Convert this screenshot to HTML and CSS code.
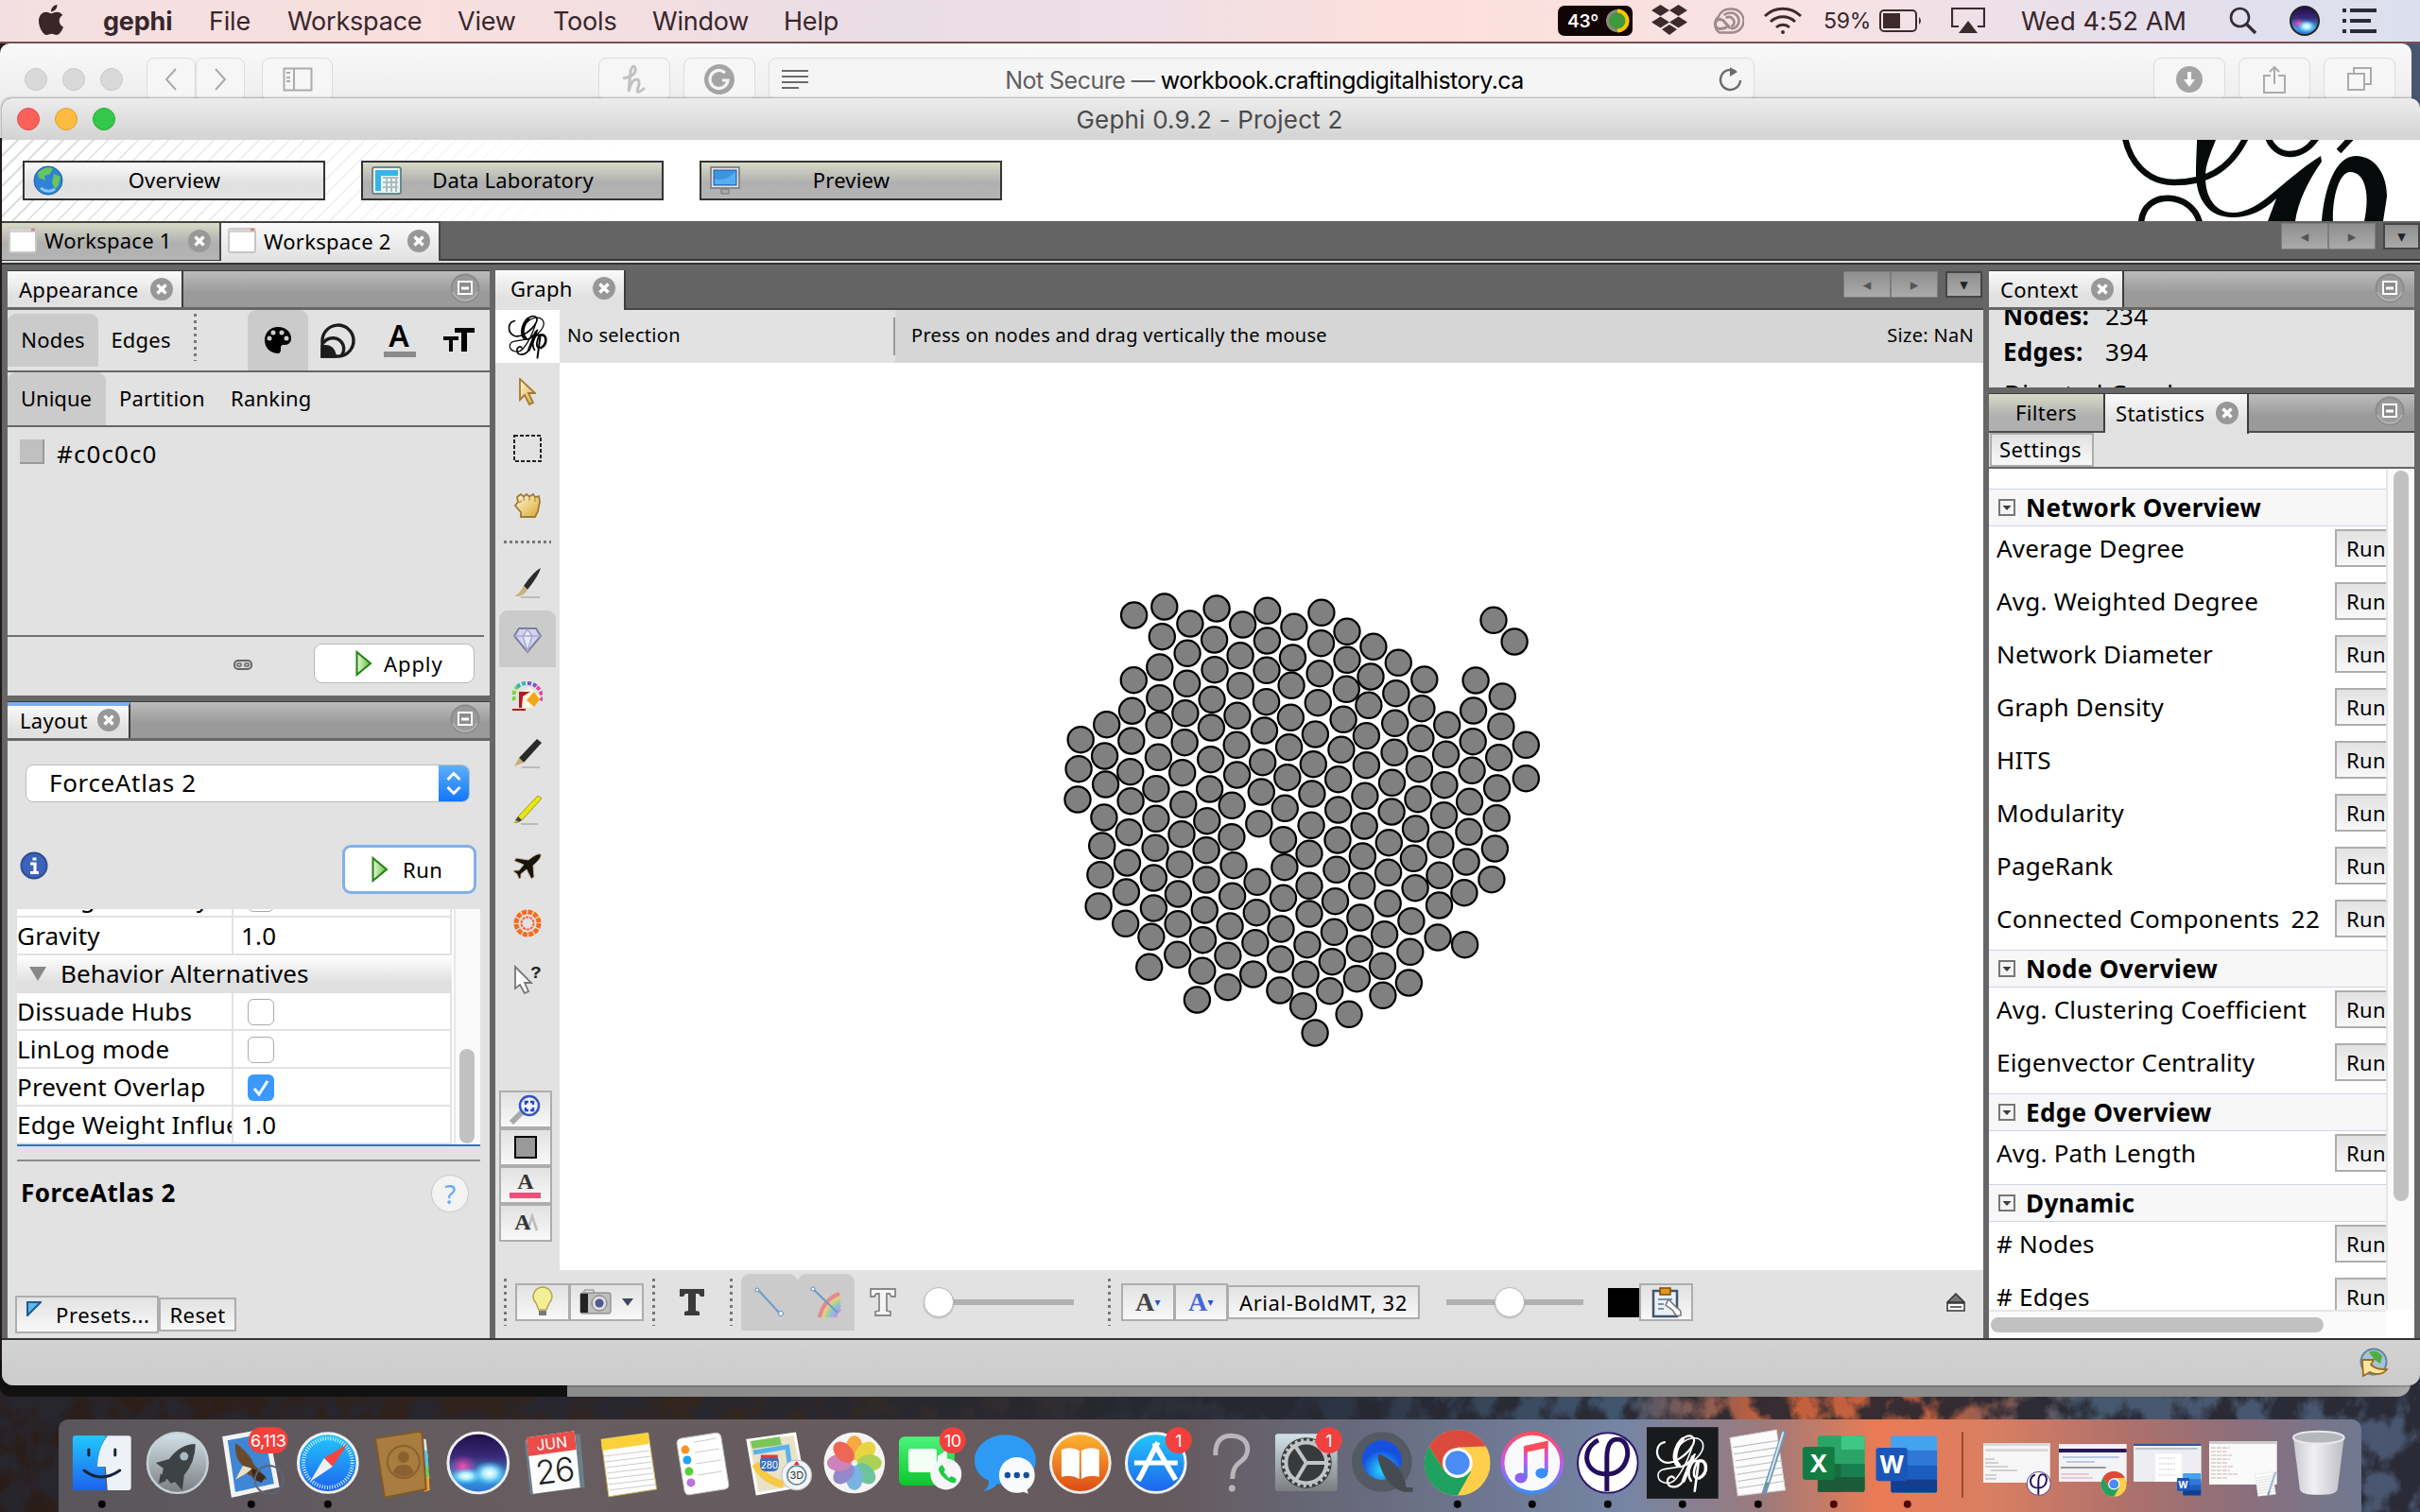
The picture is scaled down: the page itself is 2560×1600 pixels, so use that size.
FILE: index.html
```html
<!DOCTYPE html>
<html lang="en">
<head>
<meta charset="utf-8">
<title>Gephi 0.9.2 - Project 2</title>
<link rel="stylesheet" href="styles.css">
</head>
<body>
<svg class="defs" aria-hidden="true">
  <defs>
    <linearGradient id="gBlue" x2="0" y2="1"><stop stop-color="#22c8fb"/><stop offset="1" stop-color="#1e62ee"/></linearGradient>
    <linearGradient id="gGreen" x2="0" y2="1"><stop stop-color="#4df37a"/><stop offset="1" stop-color="#0cc62e"/></linearGradient>
    <linearGradient id="gOrange" x2="0" y2="1"><stop stop-color="#fdb62f"/><stop offset="1" stop-color="#dc4a17"/></linearGradient>
    <linearGradient id="gGrey" x2="0" y2="1"><stop stop-color="#d3e3ea"/><stop offset="1" stop-color="#7b7e81"/></linearGradient>
    <linearGradient id="gGold" x2="1" y2="1"><stop stop-color="#fff8e0"/><stop offset="1" stop-color="#d9a92c"/></linearGradient>
    <linearGradient id="gPlay" x2="1" y2="0"><stop stop-color="#e8f6d8"/><stop offset="1" stop-color="#62bd3b"/></linearGradient>
    <radialGradient id="gSiri"><stop stop-color="#7be8ff"/><stop offset=".45" stop-color="#5a3fb5"/><stop offset="1" stop-color="#0d0b33"/></radialGradient>
    <linearGradient id="gOrb" x2="0" y2="1"><stop stop-color="#1c0d45"/><stop offset=".4" stop-color="#3a2a78"/><stop offset=".75" stop-color="#38a0e0"/><stop offset="1" stop-color="#2b6fd0"/></linearGradient>
    <radialGradient id="gPink"><stop stop-color="#ff4fb0"/><stop offset="1" stop-color="#c22f9f" stop-opacity="0"/></radialGradient>
    <radialGradient id="gIce"><stop stop-color="#ffffff"/><stop offset=".4" stop-color="#a6ecff"/><stop offset="1" stop-color="#49c4ff" stop-opacity="0"/></radialGradient>
    <radialGradient id="gQt" cy=".75"><stop stop-color="#29dcff"/><stop offset="1" stop-color="#1550e0"/></radialGradient>
    <linearGradient id="gNote" x2="0" y2="1"><stop stop-color="#fb4d5d"/><stop offset=".5" stop-color="#c558f0"/><stop offset="1" stop-color="#3a8dfb"/></linearGradient>
    <linearGradient id="gTrash" x2="1" y2="0"><stop stop-color="#c9c9cf"/><stop offset=".4" stop-color="#f1f1f4"/><stop offset="1" stop-color="#bcbcc4"/></linearGradient>
    <linearGradient id="gRain" x2="1" y2="0"><stop stop-color="#ee7474"/><stop offset=".5" stop-color="#9bd58b"/><stop offset="1" stop-color="#ae8ce0"/></linearGradient>
    <symbol id="close" viewBox="0 0 24 24"><circle cx="12" cy="12" r="12" fill="#989898"/><path d="M7.500 7.500l9 9M16.500 7.500l-9 9" stroke="#fff" stroke-width="3.400"/></symbol>
    <symbol id="mini" viewBox="0 0 32 32"><circle cx="16" cy="16" r="14.500" fill="#9a9a9a" stroke="#8b8b8b" stroke-width="2"/><path d="M3 20a14 14 0 0 0 26 0" fill="none" stroke="#b4b4b4" stroke-width="2"/><rect x="9" y="9" width="14" height="13" fill="#8c8c8c" stroke="#fff" stroke-width="2"/><path d="M12 16h8" stroke="#fff" stroke-width="3"/></symbol>
    <symbol id="play" viewBox="0 0 18 28"><path d="M1.500 2v24L16 14z" fill="url(#gPlay)" stroke="#1d8410" stroke-width="2"/></symbol>
    <symbol id="page" viewBox="0 0 32 30"><rect x="2" y="2" width="28" height="25" rx="2" fill="#fff" stroke="#c8c6c4" stroke-width="2"/><path d="M2 4h28" stroke="#d6d2d0" stroke-width="4"/><path d="M25 3h4" stroke="#d58a84" stroke-width="3"/></symbol>
    <symbol id="twisty" viewBox="0 0 18 18"><rect x="1" y="1" width="16" height="16" fill="#f4f4f4" stroke="#767676" stroke-width="2"/><path d="M4.500 7h9L9 12z" fill="#3c3c3c"/></symbol>
    <symbol id="gephi" viewBox="0 0 64 64"><g fill="none" stroke="currentColor" stroke-linecap="round"><path stroke-width="2.200" d="M14 10C4 12 3 26 13 31 24 35 39 22 44 13 48 5 42 1 35 5 25 10 21 26 26 34 31 40 41 32 46 23"/><path stroke-width="1.600" d="M28 16C36 4 50 3 54 10 58 18 48 30 35 35 22 39 8 36 7 45 7 53 19 57 26 49 32 42 39 28 43 16"/><path stroke-width="4" d="M33 7C24 18 24 30 29 34M44 26L34 51"/><path stroke-width="2.200" d="M34 51C29 59 18 60 17 52 17 47 22 45 24 48"/><path stroke-width="2.500" d="M42 51C36 42 43 28 49 30 45 38 42 50 51 48"/><path stroke-width="3.500" d="M51 48C61 43 59 28 51 30"/><path stroke-width="2.600" d="M50 32L46 62"/></g></symbol>
    <symbol id="word" viewBox="0 0 66 62"><rect x="16" y="0" width="50" height="62" rx="3" fill="#45a2ee"/><path d="M16 16h50v16H16z" fill="#2f78d6"/><path d="M16 32h50v15H16z" fill="#1c5dc2"/><path d="M16 47h50v12a3 3 0 0 1-3 3H19a3 3 0 0 1-3-3z" fill="#133e8e"/><rect y="13" width="34" height="36" rx="3" fill="#1a56b8"/><text x="17" y="41" font-family="Inter" font-size="26" font-weight="700" fill="#fff" text-anchor="middle">W</text></symbol>
    <symbol id="chrome" viewBox="-34 -34 68 68"><circle r="34" fill="#ffcf4b"/><path d="M-29.500 -17A34 34 0 0 1 29.500 -17L0 -16-14 8z" fill="#dc4a3d"/><path d="M-29.500 -17A34 34 0 0 0 0 34L14 9-14 8z" fill="#1fa15f"/><circle r="15.500" fill="#fff"/><circle r="12.500" fill="#4b8bf4"/></symbol>
    <symbol id="phi" viewBox="0 0 66 66"><circle cx="33" cy="33" r="32" fill="#fff" stroke="#2c1668" stroke-width="2"/><path d="M23 9C4 18 7 45 32 45 58 45 60 8 43 8 34 8 32 18 32 28V63" fill="none" stroke="#220d5e" stroke-width="5"/></symbol>
    <symbol id="sheet" viewBox="0 0 60 70"><path d="M1 9L49 1l9 62L9 69z" fill="#fbfbfb" stroke="#d5d5d5"/><path d="M4 19l46-7M5 26l46-7M6 33l46-7M7 40l46-7M8 47l46-7M9 54l46-7M10 61l46-7" stroke="#bbb"/><path d="M57 2L39 58l-3 9" stroke="#7294ab" stroke-width="5" fill="none"/><path d="M56 3L40 55" stroke="#d6e6f0" stroke-width="2"/></symbol>
  </defs>
</svg>

<div class="desktop">
  <svg class="rock" width="2560" height="140"><filter id="rockTex" x="0" y="0" width="100%" height="100%"><feTurbulence type="fractalNoise" baseFrequency=".03 .025" numOctaves="5" seed="8"/><feColorMatrix values="0 0 0 0 0.02  0 0 0 0 0.02  0 0 0 0 0.03  4.500 0 0 0 -1.700"/></filter><rect width="2560" height="140" filter="url(#rockTex)"/></svg>

  <header class="menubar">
    <svg class="apple" viewBox="0 0 24 24"><path fill="#38262b" d="M12.152 6.896c-.948 0-2.415-1.078-3.96-1.04-2.04.027-3.91 1.183-4.961 3.014-2.117 3.675-.546 9.103 1.519 12.09 1.013 1.454 2.208 3.09 3.792 3.039 1.52-.065 2.09-.987 3.935-.987 1.831 0 2.35.987 3.96.948 1.637-.026 2.676-1.48 3.676-2.948 1.156-1.688 1.636-3.325 1.662-3.415-.039-.013-3.182-1.221-3.22-4.857-.026-3.04 2.48-4.494 2.597-4.559-1.429-2.09-3.623-2.324-4.39-2.376-2-.156-3.675 1.09-4.61 1.09zM15.53 3.83c.843-1.012 1.4-2.427 1.245-3.83-1.207.052-2.662.805-3.532 1.818-.78.896-1.454 2.338-1.273 3.714 1.338.104 2.715-.688 3.559-1.701"/></svg>
    <nav class="menus"><b>gephi</b><span>File</span><span>Workspace</span><span>View</span><span>Tools</span><span>Window</span><span>Help</span></nav>
    <div class="tray">
      <span class="temp">43º<svg width="26" height="28" viewBox="0 0 26 28"><circle cx="13" cy="14" r="10.500" fill="#3f9a3a" stroke="#8d8580" stroke-width="3"/><path d="M13 3.500a10.500 10.500 0 0 1 0 21" fill="none" stroke="#ffc400" stroke-width="4"/></svg></span>
      <svg class="t-drop" width="38" height="34" viewBox="0 0 38 34" fill="#3c2a2d"><path d="M9.500 0L19 6 9.500 12 0 6zM28.500 0L38 6l-9.500 6L19 6zM9.500 12.500L19 18.500l-9.500 6-9.500-6zM28.500 12.500l9.500 6-9.500 6-9.500-6zM19 21l8 5-8 6-8-6z"/></svg>
      <svg class="t-cc" width="38" height="28" viewBox="0 0 38 28" fill="none" stroke="#9c8a8c"><path d="M12 26.500a10.500 10.500 0 0 1-1-17A12.500 12.500 0 0 1 24 1.500a12.500 12.500 0 0 1 2 25z" stroke-width="2.400"/><path d="M20 20.500q-3 2-7.500 2a5 5 0 0 1 0-10q3 0 5 3l6 6.500" stroke-width="3"/><path d="M16.500 8q3-2.500 7.500-2.500a8.500 8.500 0 0 1 0 17M18.500 11q5-3 8 1.500t-2 7.500" stroke-width="2.600"/></svg>
      <svg class="t-wifi" width="42" height="30" viewBox="0 0 42 30" fill="none" stroke="#3c2a2d" stroke-width="3"><path d="M2 10a27 27 0 0 1 38 0M8 16a19 19 0 0 1 26 0M14 22a10.500 10.500 0 0 1 14 0"/><circle cx="21" cy="27" r="2" fill="#3c2a2d" stroke="none"/></svg>
      <span class="pct">59%</span>
      <svg class="t-bat" width="46" height="24" viewBox="0 0 46 24"><rect x="1" y="1" width="38" height="22" rx="4" fill="none" stroke="#3c2a2d" stroke-width="2"/><path d="M4 4h18v16H4z" fill="#3c2a2d"/><path d="M42 8q4 4 0 8z" fill="#3c2a2d"/></svg>
      <svg class="t-air" width="36" height="28" viewBox="0 0 36 28"><path d="M8 20H1V1h34v19h-7" fill="none" stroke="#3c2a2d" stroke-width="2.200"/><path d="M18 14l10 13H8z" fill="#3c2a2d"/></svg>
      <span class="clock">Wed 4:52 AM</span>
      <svg class="t-find" width="30" height="30" viewBox="0 0 30 30" fill="none" stroke="#332c38" stroke-width="2.600"><circle cx="11.500" cy="11.500" r="9.500"/><path d="M18 18l10 10" stroke-width="3.400"/></svg>
      <svg class="t-siri" width="32" height="32" viewBox="0 0 32 32"><circle cx="16" cy="16" r="15" fill="url(#gOrb)" stroke="#222" stroke-width="2"/><ellipse cx="10" cy="19" rx="8" ry="6" fill="url(#gPink)"/><ellipse cx="18" cy="22" rx="10" ry="7" fill="url(#gIce)"/></svg>
      <svg class="t-list" width="38" height="26" viewBox="0 0 38 26" fill="none" stroke="#2b2b36" stroke-width="4"><path d="M0 2h4M8 2h28M0 13h4M8 13h22M0 24h4M8 24h28"/></svg>
    </div>
  </header>

  <section class="safari">
    <div class="lights off"><i></i><i></i><i></i></div>
    <span class="sb back"><svg width="16" height="26" viewBox="0 0 16 26"><path d="M13 2L3 13l10 11"/></svg></span>
    <span class="sb fwd"><svg width="16" height="26" viewBox="0 0 16 26"><path d="M3 2l10 11L3 24"/></svg></span>
    <span class="sb side"><svg width="32" height="26" viewBox="0 0 32 26"><path d="M1.500 1.500h29v23h-29zM12 2v22M4 6h4M4 11h4M4 15h4"/></svg></span>
    <span class="sb honey"><svg width="26" height="32" viewBox="0 0 26 32"><path d="M1 15Q16 12 14 4 12-1 9 7L7 29Q10 16 15 16T17 25 24 25" stroke-width="3"/></svg></span>
    <span class="sb gram"><svg width="34" height="34" viewBox="0 0 34 34"><circle cx="17" cy="17" r="16" fill="#a4a4a4" stroke="none"/><path d="M23 10a9.500 9.500 0 1 0 3 8h-6" stroke="#f3f3f3" stroke-width="3.200"/></svg></span>
    <div class="addr">
      <svg width="30" height="22" viewBox="0 0 30 22" stroke="#6b6b6b" stroke-width="2.200"><path d="M0 2h28M0 8h28M0 14h28M0 20h18"/></svg>
      <p><span>Not Secure —</span> workbook.craftingdigitalhistory.ca</p>
      <svg width="26" height="28" viewBox="0 0 26 28" fill="none" stroke="#6b6b6b" stroke-width="2.400"><path d="M18 5.500A10.500 10.500 0 1 0 23 15"/><path d="M12 1l8 5-8 5z" fill="#6b6b6b" stroke="none"/></svg>
    </div>
    <span class="sb down"><svg width="28" height="28" viewBox="0 0 28 28"><circle cx="14" cy="14" r="14" fill="#a4a4a4" stroke="none"/><path d="M14 6v9" stroke="#fff" stroke-width="4"/><path d="M8 14h12l-6 8z" fill="#fff" stroke="none"/></svg></span>
    <span class="sb share"><svg width="24" height="30" viewBox="0 0 24 30"><path d="M8 11H1v18h22V11h-7M12 20V2M7 7l5-5 5 5"/></svg></span>
    <span class="sb tabsb"><svg width="26" height="26" viewBox="0 0 26 26"><path d="M1 7h17v17H1zM7 7V1h18v17h-7"/></svg></span>
  </section>
  <div class="backwin dark"></div>
  <div class="backwin grey"></div>

  <main class="gephi">
    <div class="titlebar"><div class="lights"><i></i><i></i><i></i></div><h1>Gephi 0.9.2 - Project 2</h1></div>
    <div class="banner">
      <button class="mode on"><svg width="32" height="32" viewBox="0 0 32 32"><circle cx="16" cy="16" r="15" fill="#2f83d6" stroke="#1d5fa8"/><path d="M5 8q8-8 16-5l-3 6-6 2 1 5-7-3zM22 9l7 3-2 9-4 4-3-7z" fill="#67c65e"/><path d="M8 24q8 6 15 1" stroke="#8cc5f6" stroke-width="3" fill="none"/></svg><span>Overview</span></button>
      <button class="mode"><svg width="32" height="32" viewBox="0 0 32 32"><rect x="1" y="2" width="30" height="28" rx="2" fill="#eef4f4" stroke="#6b8a8c" stroke-width="2"/><path d="M4 5h24v6H4zM4 5h6v22H4z" fill="#35b4ea"/><path d="M12 13h16M12 18h16M12 23h16M16 12v16M21 12v16M26 12v16" stroke="#a8bfc0" stroke-width="2"/></svg><span>Data Laboratory</span></button>
      <button class="mode"><svg width="32" height="32" viewBox="0 0 32 32"><rect x="1" y="2" width="30" height="22" fill="#e8e6e2" stroke="#888" stroke-width="2"/><rect x="4" y="5" width="24" height="16" fill="#3d94e0" stroke="#1d5fa8"/><path d="M5 14q10 4 22-7v13H5z" fill="#57aef0"/><path d="M12 25h8v5h-8z" fill="#aaa" stroke="#777"/></svg><span>Preview</span></button>
      <svg class="script" width="290" height="86" viewBox="0 0 290 86" fill="none" stroke="#070a0b"><path stroke-width="6.500" d="M3-2C8 22 25 45 55 45 86 45 113 34 131-3"/><path d="M79 0h20C90 22 88 30 88 40 88 60 98 77 117 77 146 77 166 45 210 17l1 6C196 44 186 66 183 86h-29C157 78 160 70 163 62 148 76 134 82 117 82 90 82 79 62 78 38 78 20 79 10 79 0z" fill="#070a0b" stroke="none"/><path stroke-width="6.500" d="M154-3C162 20 190 22 206-3M243-3L229 12M20 88C22 52 74 54 82 88"/><path d="M211 86C214 50 226 17 247 17 268 17 280 37 280 60L276 86H256C262 60 258 34 241 34 230 34 222 60 223 86z" fill="#070a0b" stroke="none"/></svg>
    </div>
    <div class="wsbar">
      <span class="wtab"><svg width="32" height="30"><use href="#page"/></svg><b>Workspace 1</b><svg class="x" width="24" height="24"><use href="#close"/></svg></span>
      <span class="wtab on"><svg width="32" height="30"><use href="#page"/></svg><b>Workspace 2</b><svg class="x" width="24" height="24"><use href="#close"/></svg></span>
      <div class="navs"><i>◂</i><i>▸</i><i class="dd">▾</i></div>
    </div>

    <div class="cols">
      <div class="col">
        <section class="panel appearance">
          <div class="tabs"><span class="tab on ap">Appearance<svg width="24" height="24"><use href="#close"/></svg></span><svg class="mini" width="32" height="32"><use href="#mini"/></svg></div>
          <div class="row1"><span class="tg on">Nodes</span><span class="tg">Edges</span><i class="vdots"></i>
            <span class="ib on first"><svg width="30" height="28" viewBox="0 0 30 28"><path d="M15 0C24 0 29 6 29 12 29 19 23 19 20 19 16 20 20 26 16 28 6 28 1 21 1 14 1 6 7 0 15 0z"/><g fill="#ccc"><circle cx="6" cy="12" r="2.500"/><circle cx="10" cy="6" r="2.500"/><circle cx="19" cy="6" r="2.500"/><circle cx="24" cy="12" r="2.500"/></g></svg></span>
            <span class="ib"><svg width="38" height="38" viewBox="0 0 38 38" fill="none" stroke="#1c1c1c" stroke-width="3.400"><path d="M2 20V36H20A16.500 16.500 0 1 0 2 20z"/><path d="M3 22a12 12 0 0 1 21 2q2 6-2 12"/><path d="M2 36V26q12-2 13 10z" fill="#1c1c1c"/></svg></span>
            <span class="ib"><svg width="38" height="38" viewBox="0 0 38 38"><path d="M3 31h34v6H3z" fill="#8b8b8b"/><text x="19" y="26" font-size="32" text-anchor="middle" font-family="Noto Sans" font-weight="600">A</text></svg></span>
            <span class="ib"><svg width="34" height="26" viewBox="0 0 34 26"><path d="M12 0h21v5h-8v20h-6V5h-7zM0 9h16v4h-6v12H6V13H0z"/></svg></span>
          </div>
          <div class="row2"><span class="tg on">Unique</span><span class="tg">Partition</span><span class="tg">Ranking</span></div>
          <div class="swatch"><i></i><span>#c0c0c0</span></div>
          <div class="apply"><svg width="20" height="12" viewBox="0 0 20 12" fill="#d8d8d8" stroke="#666" stroke-width="2"><rect x="1" y="1" width="18" height="9" rx="4"/><rect x="4" y="4" width="4" height="3" rx="1" stroke-width="1.500"/><rect x="12" y="4" width="4" height="3" rx="1" stroke-width="1.500"/></svg><button class="mac"><svg width="18" height="28"><use href="#play"/></svg>Apply</button></div>
        </section>

        <section class="panel layout">
          <div class="tabs"><span class="tab on focus">Layout<svg width="24" height="24"><use href="#close"/></svg></span><svg class="mini" width="32" height="32"><use href="#mini"/></svg></div>
          <div class="combo"><span>ForceAtlas 2</span><i><svg width="16" height="26" viewBox="0 0 16 26" fill="none" stroke="#fff" stroke-width="3"><path d="M1.500 9L8 2.500 14.500 9M1.500 17L8 23.500 14.500 17"/></svg></i></div>
          <div class="runrow"><svg width="30" height="30" viewBox="0 0 30 30"><circle cx="15" cy="15" r="13.500" fill="#3c63b9" stroke="#2d4b91" stroke-width="2"/><path d="M11 13h5v9M11 22.500h9M13.500 8h4" stroke="#fff" stroke-width="3.200" fill="none"/></svg><button class="mac ring"><svg width="18" height="28"><use href="#play"/></svg>Run</button></div>
          <div class="props">
            <div class="ptable">
              <div class="pr cut"><span>Stronger Gravity</span><span><i class="cb"></i></span></div>
              <div class="pr"><span>Gravity</span><span>1.0</span></div>
              <div class="pgroup"><i></i>Behavior Alternatives</div>
              <div class="pr"><span>Dissuade Hubs</span><span><i class="cb"></i></span></div>
              <div class="pr"><span>LinLog mode</span><span><i class="cb"></i></span></div>
              <div class="pr"><span>Prevent Overlap</span><span><i class="cb ck"><svg width="28" height="28" viewBox="0 0 28 28"><path d="M7 15l5 6 9-14" fill="none" stroke="#fff" stroke-width="3"/></svg></i></span></div>
              <div class="pr"><span>Edge Weight Influence</span><span>1.0</span></div>
            </div>
            <div class="pscroll"><i></i></div>
          </div>
          <div class="pdesc"><b>ForceAtlas 2</b><span class="q">?</span></div>
          <div class="pfoot"><button class="flat pre"><svg width="16" height="16" viewBox="0 0 16 16"><path d="M1 1h14L1 15z" fill="#5fb6ea" stroke="#1b5d92" stroke-width="2"/></svg>Presets...</button><button class="flat">Reset</button></div>
        </section>
      </div>

      <section class="graph">
        <div class="gtabs"><span class="tab on">Graph<svg width="24" height="24"><use href="#close"/></svg></span><div class="navs"><i>◂</i><i>▸</i><i class="dd">▾</i></div></div>
        <div class="gmid">
          <aside class="tools">
            <span class="logo"><svg width="52" height="48"><use href="#gephi"/></svg></span>
            <div class="tool a"><svg width="18" height="30" viewBox="0 0 18 30"><path d="M1 1v22l5-5 5 10 4-2-5-10h7z" fill="url(#gGold)" stroke="#a07a35" stroke-width="1.800"/></svg></div>
            <div class="tool b"><svg width="30" height="30" viewBox="0 0 30 30"><rect x="1" y="1" width="28" height="27" fill="none" stroke="#222" stroke-width="2" stroke-dasharray="4 2"/></svg></div>
            <div class="tool c"><svg width="28" height="26" viewBox="0 0 28 26"><path d="M7 25v-5l-6-7 3-4-1-5 4-3 3 2.500 3-2.500 3 2.500 4-2.500 2 3 4-1 1 6-2 10-3 6z" fill="url(#gGold)" stroke="#a07a35" stroke-width="1.800"/><path d="M10 4v4M16 4v4M22 5v4M4 10l4-2" stroke="#c69a45" stroke-width="1.500"/></svg></div>
            <i class="hdots"></i>
            <div class="tool d"><svg width="30" height="32" viewBox="0 0 30 32"><path d="M29 0q-2 8-14 23l-4-4Q22 3 29 0z" fill="#2b2b2b"/><path d="M11 19l4 4q-4 8-14 7 6-3 10-11z" fill="#c7b079"/><path d="M8 31h20" stroke="#bbb" stroke-width="2"/></svg></div>
            <div class="tool on"><svg width="30" height="28" viewBox="0 0 30 28"><path d="M6 1h18l5 8-14 17L1 9z" fill="#d5d5f2" stroke="#7c7c9e" stroke-width="2"/><path d="M1 9h28M10 9l5 16 5-16-5-7z" fill="#e8e8fa" stroke="#a9a9cc" stroke-width="1.500"/></svg></div>
            <div class="tool"><svg width="32" height="32" viewBox="0 0 32 32"><g fill="none" stroke-width="4" stroke-dasharray="4 2"><path d="M2 20A14 14 0 0 1 5 6" stroke="#6fd83a"/><path d="M5 6A14 14 0 0 1 16 2" stroke="#35b6b0"/><path d="M16 2a14 14 0 0 1 10 4" stroke="#7a58c8"/><path d="M26 6a14 14 0 0 1 4 16" stroke="#e0489f"/></g><path d="M8 13l10-7 12 11-9 11H10z" fill="#fdf5e6"/><path d="M15 20l8-9 6 8-6 8z" fill="#f0a818"/><path d="M7 28V11h12l-8 5-1 12zM0 29h14v2H0z" fill="#b01c1c"/></svg></div>
            <div class="tool"><svg width="32" height="32" viewBox="0 0 32 32"><path d="M31 5l-5-4L7 21l5 5z" fill="#2a2a2a"/><path d="M7 21l5 5-10 4z" fill="#c9ac74"/><path d="M10 31h19" stroke="#bbb" stroke-width="2"/></svg></div>
            <div class="tool"><svg width="32" height="32" viewBox="0 0 32 32"><path d="M31 4l-4-3L6 23l4 4z" fill="#e8e60d" stroke="#9c9b22"/><path d="M6 23l4 4-3 2-4-2z" fill="#444"/><path d="M4 27l3 3H1z" fill="#b9b80f"/><path d="M9 31h18" stroke="#bbb" stroke-width="2"/></svg></div>
            <div class="tool pl"><svg width="30" height="28" viewBox="0 0 30 28"><path d="M29 1q2 3-8 12l1 12-3 2-5-10-6 5 0 4-2 1-2-5-4-3 1-1 5 0 5-6L1 8l2-3 13 2Q26-1 29 1z" fill="#17150f" stroke="#cbb98c"/></svg></div>
            <div class="tool"><svg width="30" height="30" viewBox="0 0 30 30" fill="none" stroke="#f76b1c"><circle cx="15" cy="15" r="12" stroke-width="5" stroke-dasharray="5 1.280"/><circle cx="15" cy="15" r="6.500" stroke-width="2" stroke="#f4623a" stroke-dasharray="3 1"/></svg></div>
            <div class="tool h"><svg width="30" height="34" viewBox="0 0 30 34"><path d="M2 3v23l5-4 5 9 4-2-4-9h7z" fill="#fff" stroke="#777" stroke-width="1.800"/><text x="24" y="15" font-size="19" font-weight="700" text-anchor="middle" font-family="Liberation Mono" fill="#222">?</text></svg></div>
            <div class="vbtns">
              <button class="flat"><svg width="34" height="32" viewBox="0 0 34 32"><path d="M2 30L13 19" stroke="#aaa" stroke-width="6"/><circle cx="21" cy="12" r="10" fill="#eef3ff" stroke="#3756bb" stroke-width="2.500"/><path d="M17 11V8h3M22 8h3v3M25 14v3h-3M20 17h-3v-3" fill="none" stroke="#2547c6" stroke-width="2.400"/></svg></button>
              <button class="flat"><svg width="24" height="24" viewBox="0 0 24 24"><rect x="1" y="1" width="22" height="22" fill="#999" stroke="#000" stroke-width="2"/></svg></button>
              <button class="flat"><svg width="34" height="30" viewBox="0 0 34 30"><text x="17" y="19" font-size="24" font-weight="700" text-anchor="middle" font-family="Liberation Serif" fill="#333">A</text><path d="M0 23h33v6H0z" fill="#f9497a"/></svg></button>
              <button class="flat"><svg width="34" height="30" viewBox="0 0 34 30"><path d="M19 23l5-15 5 15" fill="none" stroke="#bbb" stroke-width="2.500"/><text x="14" y="22" font-size="24" font-weight="700" text-anchor="middle" font-family="Liberation Serif" fill="#333">A</text></svg></button>
            </div>
          </aside>
          <div class="gright">
            <div class="infobar"><span class="sel">No selection</span><span class="hint">Press on nodes and drag vertically the mouse</span><span class="size">Size: NaN</span></div>
            <div class="canvas"><svg id="net" viewBox="592 384 1506 960"></svg></div>
          </div>
        </div>
        <div class="gbar">
          <i class="vdots"></i>
          <button class="flat bulb"><svg width="24" height="34" viewBox="0 0 24 34"><path d="M12 1a10 10 0 0 1 7 17l-3 7H8l-3-7A10 10 0 0 1 12 1z" fill="#f4ef96" stroke="#b8a450" stroke-width="1.500"/><path d="M8 26h8v5H8z" fill="#777"/></svg></button>
          <button class="flat cam"><svg width="34" height="28" viewBox="0 0 34 28"><rect x="1" y="4" width="32" height="22" rx="2" fill="#bebebe" stroke="#777"/><path d="M1 5h8v20H1z" fill="#222"/><path d="M5 1h10v3H5z" fill="#ddd" stroke="#888"/><circle cx="21" cy="15" r="8" fill="#ddd" stroke="#777"/><circle cx="21" cy="15" r="4.500" fill="#4c5a95"/></svg><svg width="12" height="8"><path d="M0 0h12L6 8z" fill="#3e4a5c"/></svg></button>
          <i class="vdots d2"></i>
          <svg class="bigT" width="30" height="30" viewBox="0 0 30 30"><path d="M2 1h26v8h-4l-2-3h-3v18l4 1v4H7v-4l4-1V6H8L6 9H2z" fill="#3b3b3b"/></svg>
          <i class="vdots d3"></i>
          <span class="eb"><svg width="34" height="32" viewBox="0 0 34 32"><path d="M5 3l23 25" stroke="#6d9cc8" stroke-width="2"/><circle cx="4" cy="3" r="2" fill="#fff" stroke="#5b8dbd"/><circle cx="29" cy="28" r="2.500" fill="#fff" stroke="#5b8dbd"/></svg></span><span class="eb"><svg width="34" height="34" viewBox="0 0 34 34" fill="none"><g stroke-width="4" opacity=".75"><path d="M10 33Q14 14 31 8" stroke="#ee7474"/><path d="M14 33Q18 18 32 12" stroke="#f3c76a"/><path d="M18 33Q21 22 32 16" stroke="#8fd58b"/><path d="M22 33Q24 25 32 20" stroke="#7fb4ec"/><path d="M26 33Q27 28 32 24" stroke="#b18ce0"/></g><path d="M3 3l26 25" stroke="#6d9cc8" stroke-width="2"/><circle cx="3" cy="3" r="2" fill="#fff" stroke="#5b8dbd"/></svg></span>
          <svg class="bigT o" width="30" height="30" viewBox="0 0 30 30"><path d="M2 1h26v8h-4l-2-3h-3v18l4 1v4H7v-4l4-1V6H8L6 9H2z" fill="#f4f4f4" stroke="#888" stroke-width="1.800"/></svg>
          <div class="slider s1"><i></i></div>
          <i class="vdots d4"></i>
          <button class="flat fa">A<em>▾</em></button><button class="flat fa blue">A<em>▾</em></button><button class="flat font">Arial-BoldMT, 32</button>
          <div class="slider s2"><i></i></div>
          <i class="black"></i>
          <button class="flat clip"><svg width="34" height="34" viewBox="0 0 34 34"><rect x="3" y="5" width="25" height="27" fill="#e9f1f7" stroke="#41566b" stroke-width="2.500"/><path d="M10 2h11v7H10z" fill="#e2941d" stroke="#7b4c0b" stroke-width="1.500"/><path d="M8 14h15M8 19h6M8 24h6" stroke="#7a93ab" stroke-width="2"/><path d="M19 14l9 9q5 2 4 8-6 2-8-5l-8-6z" fill="#fff" stroke="#777" stroke-width="1.500"/></svg></button>
          <svg class="eject" width="20" height="20" viewBox="0 0 20 20"><path d="M10 1l9 9H1z" fill="#777" stroke="#333" stroke-width="1.500"/><rect x="1" y="11" width="18" height="8" fill="#fff" stroke="#333" stroke-width="1.500"/><path d="M4 15h12" stroke="#333" stroke-width="1.500"/></svg>
        </div>
      </section>

      <div class="col">
        <section class="panel context">
          <div class="tabs"><span class="tab on ctx">Context<svg width="24" height="24"><use href="#close"/></svg></span><svg class="mini" width="32" height="32"><use href="#mini"/></svg></div>
          <div class="cbody"><div class="cl half"><b>Nodes:</b><span>234</span></div><div class="cl"><b>Edges:</b>394</div><div class="cl dg">Directed Graph</div></div>
        </section>
        <section class="panel stats">
          <div class="tabs"><span class="tab off">Filters</span><span class="tab on st">Statistics<svg width="24" height="24"><use href="#close"/></svg></span><svg class="mini" width="32" height="32"><use href="#mini"/></svg></div>
          <div class="setrow"><button class="flat">Settings</button></div>
          <div class="sarea">
            <div class="slist">
              <h3><svg width="18" height="18"><use href="#twisty"/></svg>Network Overview</h3>
              <div class="sr"><span>Average Degree</span><button class="flat">Run</button></div>
              <div class="sr"><span>Avg. Weighted Degree</span><button class="flat">Run</button></div>
              <div class="sr"><span>Network Diameter</span><button class="flat">Run</button></div>
              <div class="sr"><span>Graph Density</span><button class="flat">Run</button></div>
              <div class="sr"><span>HITS</span><button class="flat">Run</button></div>
              <div class="sr"><span>Modularity</span><button class="flat">Run</button></div>
              <div class="sr"><span>PageRank</span><button class="flat">Run</button></div>
              <div class="sr"><span>Connected Components</span><em>22</em><button class="flat">Run</button></div>
              <h3><svg width="18" height="18"><use href="#twisty"/></svg>Node Overview</h3>
              <div class="sr"><span>Avg. Clustering Coefficient</span><button class="flat">Run</button></div>
              <div class="sr"><span>Eigenvector Centrality</span><button class="flat">Run</button></div>
              <h3><svg width="18" height="18"><use href="#twisty"/></svg>Edge Overview</h3>
              <div class="sr"><span>Avg. Path Length</span><button class="flat">Run</button></div>
              <h3><svg width="18" height="18"><use href="#twisty"/></svg>Dynamic</h3>
              <div class="sr"><span># Nodes</span><button class="flat">Run</button></div>
              <div class="sr"><span># Edges</span><button class="flat">Run</button></div>
            </div>
            <div class="vs"><i></i></div>
          </div>
          <div class="hs"><div><i></i></div></div>
        </section>
      </div>
    </div>
    <footer class="status"><svg width="30" height="32" viewBox="0 0 30 32"><circle cx="15" cy="15" r="13.500" fill="#a4c3d8" stroke="#65859c" stroke-width="2"/><path d="M10 5q8-4 14 4l-2 8-6-4z" fill="#4fae3b"/><path d="M3 13h12l-3 5q6 6 17 5-6 8-18 3l-7 4z" fill="#ffe6a0" stroke="#a06a1a" stroke-width="1.800"/></svg></footer>
  </main>

  <nav class="dock">
    <svg viewBox="0 0 80 98"><path d="M9 20a3 3 0 0 1 3-3h29L33 75H12a3 3 0 0 1-3-3z" fill="url(#gBlue)"/><path d="M46 17h22a3 3 0 0 1 3 3v52a3 3 0 0 1-3 3H46q-1-12-2-25H34q2-20 12-33z" fill="#edf1f8"/><path d="M9 20a3 3 0 0 1 3-3h33q-9 14-10 33h8q0 12 2 25H12a3 3 0 0 1-3-3z" fill="url(#gBlue)"/><path d="M26 32v6M54 32v6M21 54q18 14 38 0" stroke="#16243a" stroke-width="3" fill="none" stroke-linecap="round"/><circle class="dot" cx="40" cy="90" r="4"/></svg>
    <svg viewBox="0 0 80 98"><circle cx="40" cy="46" r="32" fill="url(#gGrey)" stroke="#c4d2d8" stroke-width="2.500"/><path d="M59 26q-16 0-28 16l-14 4 8 6-3 14 7-3 4 5 4-2 8 9 2-16q12-14 12-33z" fill="#3d4245"/><circle cx="47" cy="39" r="4.500" fill="#a9bac2"/><path d="M22 57q4 5 6 8l-8 3z" fill="#3d4245"/></svg>
    <svg viewBox="0 0 80 98"><path d="M11 20L55 12l11 58-46 10z" fill="#3f86d4" stroke="#f4f4f4" stroke-width="5"/><path d="M22 25q-1 16 8 24l-8 15 12-7 12 8 10-2-14-15q-4-12-20-23z" fill="#6b4a2b"/><path d="M38 50l16 10-4 7-8-3z" fill="#3c2a1c"/><path d="M30 49l-8 15 12-7 6-5z" fill="#eadfc8"/><circle cx="58" cy="64" r="15" fill="none" stroke="#59657a" stroke-width="2"/><rect x="36" y="8" width="42" height="28" rx="14" fill="#f3403d"/><text class="badge" x="57" y="29">6,113</text><circle class="dot" cx="39" cy="90" r="4"/></svg>
    <svg viewBox="0 0 80 98"><circle cx="40" cy="46" r="31.500" fill="url(#gBlue)" stroke="#f1f1f1" stroke-width="3"/><circle cx="40" cy="46" r="26" fill="none" stroke="#d8f2ff" stroke-width="4" stroke-dasharray="1 1.700"/><path d="M61 26L45 50l-9-9z" fill="#f4473f"/><path d="M21 66l15-25 9 9z" fill="#f1f1f1"/><circle class="dot" cx="40" cy="90" r="4"/></svg>
    <svg viewBox="0 0 80 98"><path d="M60 20l4 1 2 20h-5z" fill="#dfe3e5"/><path d="M60 32l5 1 2 20h-5z" fill="#58c9e8"/><path d="M61 48l5 1 2 14h-6z" fill="#6ccf5a"/><path d="M61 60l6 1 1 14-6 2z" fill="#f4a02a"/><path d="M10 20L54 13q5-1 6 3l4 58L20 83z" fill="#a97c40" stroke="#80592a" stroke-width="2"/><circle cx="40" cy="45" r="17" fill="none" stroke="#8a6230" stroke-width="2"/><circle cx="40" cy="40" r="6" fill="#8a6230"/><path d="M29 56q2-8 11-8t11 8q-11 9-22 0z" fill="#8a6230"/></svg>
    <svg viewBox="0 0 80 98"><circle cx="40" cy="46" r="32" fill="url(#gOrb)" stroke="#efeff4" stroke-width="3"/><ellipse cx="24" cy="50" rx="15" ry="13" fill="url(#gPink)"/><ellipse cx="27" cy="60" rx="17" ry="9" fill="url(#gIce)"/><ellipse cx="52" cy="57" rx="18" ry="13" fill="url(#gIce)"/></svg>
    <svg viewBox="0 0 80 98"><path d="M9 22l59-7 5 57-58 8z" fill="#6a7f88"/><path d="M11 19L62 12l6 60-50 7z" fill="#fdfdfd"/><path d="M11 19L62 12l2 20-51 7z" fill="#ea4c48"/><text x="38" y="31" font-size="16" fill="#fff" text-anchor="middle" font-family="Inter" transform="rotate(-7 38 26)">JUN</text><text x="41" y="67" font-size="35" letter-spacing="-1" fill="#222" text-anchor="middle" font-family="Inter" font-weight="300" transform="rotate(-7 41 55)">26</text></svg>
    <svg viewBox="0 0 80 98"><path d="M11 21L61 14l9 60-51 8z" fill="#fff" stroke="#c9ae50"/><path d="M11 21L61 14l1 12-50 7z" fill="#fbd13b"/><path d="M14 39l49-6M15 45l49-6M16 51l49-6M17 57l49-6M18 63l49-6M19 69l49-6M20 75l49-6" stroke="#ccc"/></svg>
    <svg viewBox="0 0 80 98"><path d="M11 25q0-4 4-5l38-6q4 0 5 4l8 50q1 5-4 6L24 80q-4 0-5-5z" fill="#fff" stroke="#bbb"/><circle cx="20" cy="32" r="4.500" fill="#ff9123"/><circle cx="22" cy="43" r="4.500" fill="#1fa3f2"/><circle cx="24" cy="55" r="4.500" fill="#57cf3b"/><circle cx="26" cy="67" r="4.500" fill="#be6fe0"/><path d="M29 24l24-4M30 35l26-4M31 47l27-4M33 59l26-4" stroke="#ccc"/></svg>
    <svg viewBox="0 0 80 98"><path d="M6 22L56 15l10 55-50 9z" fill="#e9e2c9" stroke="#fff" stroke-width="3"/><path d="M9 23l31-5 2 9-31 4z" fill="#7bc559"/><path d="M12 35l36-6 6 44" stroke="#58b4ee" stroke-width="5" fill="none"/><path d="M14 47q10 18 30 22" stroke="#f5c944" stroke-width="8" fill="none"/><rect x="19" y="38" width="20" height="17" rx="6" fill="#3c6fc0"/><path d="M20 39h18" stroke="#e23b3b" stroke-width="3"/><text x="29" y="52" font-size="10" fill="#fff" text-anchor="middle" font-family="Inter">280</text><circle cx="58" cy="59" r="16" fill="#f2f4f5" stroke="#bbb"/><circle cx="58" cy="59" r="10" fill="none" stroke="#5a8294" stroke-width="1.500"/><path d="M58 44l3 4h-6z" fill="#e22b2b"/><text x="58" y="63" font-size="11" fill="#333" text-anchor="middle" font-family="Inter">3D</text></svg>
    <svg viewBox="0 0 80 98"><circle cx="40" cy="46" r="32.500" fill="#f5f4f2"/><g transform="translate(40 46)" opacity=".9"><ellipse cy="-16" rx="9" ry="13" fill="#f9a12c"/><ellipse cy="-16" rx="9" ry="13" fill="#e6d32f" transform="rotate(45)"/><ellipse cy="-16" rx="9" ry="13" fill="#a5cf45" transform="rotate(90)"/><ellipse cy="-16" rx="9" ry="13" fill="#5fbf92" transform="rotate(135)"/><ellipse cy="-16" rx="9" ry="13" fill="#6aaee0" transform="rotate(180)"/><ellipse cy="-16" rx="9" ry="13" fill="#8a7ec6" transform="rotate(225)"/><ellipse cy="-16" rx="9" ry="13" fill="#c877b3" transform="rotate(270)"/><ellipse cy="-16" rx="9" ry="13" fill="#ee5743" transform="rotate(315)"/></g></svg>
    <svg viewBox="0 0 80 98"><rect x="7" y="18" width="59" height="52" rx="6" fill="url(#gGreen)"/><path d="M17 34a3 3 0 0 1 3-3h24q3 0 3 3v19q0 3-3 3H20q-3 0-3-3zM48 39l10-7v22l-10-5z" fill="#f3fff5"/><circle cx="57" cy="58" r="16.500" fill="#f5f7f6"/><path d="M50 50q-3 5 5 12t12 5l1-4-5-3-3 2-5-6 1-3-3-5z" fill="#1fcb46"/><rect x="50" y="8" width="28" height="28" rx="14" fill="#f3403d"/><text class="badge" x="64" y="29">10</text></svg>
    <svg viewBox="0 0 80 98"><path d="M40 16c18 0 32 12 32 27S58 69 40 69q-5 0-9-1-4 7-15 8 7-4 6-11Q7 58 7 43C7 28 22 16 40 16z" fill="#2e9af6"/><path d="M55 75l9 4-2-8z" fill="#f8fafb"/><circle cx="52" cy="59" r="19" fill="#f8fafb"/><g fill="#15509c"><circle cx="42" cy="59" r="3.200"/><circle cx="52" cy="59" r="3.200"/><circle cx="62" cy="59" r="3.200"/></g></svg>
    <svg viewBox="0 0 80 98"><circle cx="40" cy="46" r="31.500" fill="url(#gOrange)" stroke="#f2eeea" stroke-width="3"/><path d="M20 32q10-4 19 1v30q-9-5-19-2zM60 32q-10-4-19 1v30q9-5 19-2z" fill="#fff"/></svg>
    <svg viewBox="0 0 80 98"><circle cx="40" cy="46" r="31.500" fill="url(#gBlue)" stroke="#f1f1f1" stroke-width="3"/><path d="M17 46h46" stroke="#fff" stroke-width="5"/><path d="M42 24L24 60l-3 5M38 25l20 34 3 5" stroke="#fff" stroke-width="5.500" fill="none"/><rect x="50" y="8" width="28" height="28" rx="14" fill="#f3403d"/><text class="badge" x="64" y="29">1</text></svg>
    <svg viewBox="0 0 80 98"><path d="M23 38V34Q24 17 40 17 57 18 57 32 57 40 48 46 41 51 41 63" fill="none" stroke="#b9b5b8" stroke-width="5"/><circle cx="40.500" cy="73" r="3.500" fill="#b9b5b8"/></svg>
    <svg viewBox="0 0 80 98"><rect x="7" y="15" width="66" height="61" rx="3" fill="url(#gGrey)"/><circle cx="40" cy="46" r="27" fill="#393a3c"/><circle cx="40" cy="46" r="21.500" fill="none" stroke="#c2c4c6" stroke-width="4"/><circle cx="40" cy="46" r="24.500" fill="none" stroke="#c2c4c6" stroke-width="3" stroke-dasharray="3 3.400"/><path d="M40 46L27 26M40 46h23M40 46L28 66" stroke="#c2c4c6" stroke-width="4"/><rect x="50" y="8" width="28" height="28" rx="14" fill="#f3403d"/><text class="badge" x="64" y="29">1</text></svg>
    <svg viewBox="0 0 80 98"><circle cx="40" cy="45" r="32" fill="#535a63"/><circle cx="40" cy="43" r="21" fill="url(#gQt)"/><path d="M38 37q24 10 28 35h7v5h-9q-18-4-26-28-4-12 0-12z" fill="#464b52"/></svg>
    <svg viewBox="0 0 80 98"><use href="#chrome" x="5" y="11" width="70" height="70"/><circle class="dot" cx="40" cy="90" r="4"/></svg>
    <svg viewBox="0 0 80 98"><circle cx="40" cy="46" r="31.500" fill="#fafafc" stroke="url(#gNote)" stroke-width="4"/><path d="M33 62V30l22-5v31" fill="none" stroke="url(#gNote)" stroke-width="4"/><path d="M32 28l24-5v7l-24 5z" fill="#fb4d5d"/><ellipse cx="28" cy="62" rx="6.500" ry="5.500" fill="#8a62f5"/><ellipse cx="50" cy="57" rx="6.500" ry="5.500" fill="#3a8dfb"/><circle class="dot" cx="40" cy="90" r="4"/></svg>
    <svg viewBox="0 0 80 98"><use href="#phi" x="7" y="13" width="66" height="66"/><circle class="dot" cx="40" cy="90" r="4"/></svg>
    <svg viewBox="0 0 80 98"><rect x="2" y="8" width="76" height="76" fill="#181a1b"/><use href="#gephi" x="7" y="14" width="64" height="64" color="#fff"/><circle class="dot" cx="40" cy="90" r="4"/></svg>
    <svg viewBox="0 0 80 98"><use href="#sheet" x="9" y="10" width="62" height="72"/><circle class="dot" cx="40" cy="90" r="4"/></svg>
    <svg viewBox="0 0 80 98"><rect x="23" y="17" width="50" height="60" rx="3" fill="#2aa468"/><path d="M48 17h22a3 3 0 0 1 3 3v12H48z" fill="#40c785"/><path d="M23 47h25v30H23z" fill="#1a6a3f"/><path d="M48 47h25v14H48z" fill="#188050"/><path d="M23 61h50v13a3 3 0 0 1-3 3H26a3 3 0 0 1-3-3z" fill="#1b5c38"/><rect x="7" y="29" width="34" height="35" rx="3" fill="#137c43"/><text x="24" y="56" font-family="Inter" font-size="26" font-weight="700" fill="#fff" text-anchor="middle">X</text><circle class="dot r" cx="40" cy="90" r="4"/></svg>
    <svg viewBox="0 0 80 98"><use href="#word" x="5" y="17" width="66" height="61"/><circle class="dot r" cx="39" cy="90" r="4"/></svg>
    <i class="div"></i>
    <svg viewBox="0 0 80 98"><g><rect x="4" y="25" width="71" height="42" fill="#f6f6f6"/><path d="M4 25h71v3H4zM6 31h67v3H6z" fill="#d9d9d9"/><path d="M6 42h10M6 46h14M6 50h24M12 54h28M6 59h12M6 63h12" stroke="#aaa"/></g><use href="#phi" x="50" y="55" width="26" height="26"/></svg>
    <svg viewBox="0 0 80 98"><g><rect x="4" y="26" width="72" height="40" fill="#f3f3f6"/><path d="M4 31h72v4H4z" fill="#2a1657"/><path d="M8 40h60M12 45h30" stroke="#b7cbe0" stroke-width="2"/><path d="M6 51h48" stroke="#999" stroke-width="2"/><path d="M6 58h30M6 62h34" stroke="#e7a0b0"/></g><use href="#chrome" x="49" y="55" width="27" height="27"/></svg>
    <svg viewBox="0 0 80 98"><g><rect x="4" y="26" width="72" height="40" fill="#eceef1"/><path d="M4 26h72v2H4z" fill="#2b579a"/><path d="M27 36h28v30H27z" fill="#fff"/><path d="M6 31h66" stroke="#bcc3cc" stroke-width="2"/><path d="M31 41h18M31 47h18M31 53h18M31 59h18" stroke="#ccc" stroke-dasharray="2 1"/></g><use href="#word" x="50" y="57" width="26" height="24"/></svg>
    <svg viewBox="0 0 80 98"><g><rect x="4" y="23" width="72" height="46" fill="#fafafa"/><path d="M4 23h72v3H4z" fill="#ccc"/><path d="M6 30h20M6 34h16M6 38h22M6 42h20M6 46h18M6 50h24M6 54h20M6 58h28M6 62h18" stroke="#c9b0b0" stroke-dasharray="5 1"/></g><use href="#sheet" x="52" y="55" width="24" height="27"/></svg>
    <svg viewBox="0 0 80 98"><path d="M13 19L20 74q1 6 20 6t20-6l7-55z" fill="url(#gTrash)"/><ellipse cx="40" cy="19" rx="27" ry="6.500" fill="#b6b6bd" stroke="#e9e9ee" stroke-width="2"/></svg>
  </nav>
</div>
<script src="graph.js"></script>
</body>
</html>
```

FILE: styles.css
```css
* { box-sizing: border-box; }
body { margin: 0; font-family: "Noto Sans", "Open Sans", sans-serif; font-size: 22px; color: #000; font-variant-ligatures: none; }
button { font: inherit; color: inherit; margin: 0; padding: 0; border: 0; white-space: nowrap; }
svg { display: block; flex: none; }
i, em { font-style: normal; }
.defs { position: absolute; width: 0; height: 0; }

.desktop { position: relative; width: 2560px; height: 1600px; overflow: hidden; background: linear-gradient(90deg, #2a1d19, #33261f 30%, #2c3342 55%, #42566f 67%, #c4613c 73%, #c0613f 80%, #46586f 86%, #4a5670); }
.rock { position: absolute; left: 0; bottom: 0; opacity: .9; }

/* menu bar */
.menubar { position: absolute; left: 0; top: 0; width: 2560px; height: 46px; border-bottom: 2px solid #7d4d51; display: flex; align-items: center; background: linear-gradient(90deg, #f3dfe1, #f9dfde 18%, #e9dde6 37%, #f0dfe6 48%, #fce0db 58%, #f9e2e4 74%, #e6dfeb 88%, #dce0ee); font-family: Inter, sans-serif; font-size: 27px; color: #38262b; letter-spacing: -.2px; }
.apple { width: 32px; height: 32px; margin: -3px 0 0 38px; }
.menus { display: flex; margin-left: 39px; width: 1539px; }
.menus b { width: 112px; font-weight: 700; }
.menus span:nth-child(2) { width: 83px; }
.menus span:nth-child(3) { width: 180px; }
.menus span:nth-child(4) { width: 101px; }
.menus span:nth-child(5) { width: 105px; }
.menus span:nth-child(6) { width: 139px; }
.tray { display: flex; align-items: center; height: 44px; white-space: nowrap; }
.temp { width: 79px; height: 32px; border-radius: 7px; background: #120405; color: #fff; font-size: 19px; font-weight: 600; display: flex; align-items: center; justify-content: space-between; padding: 0 3px 0 10px; }
.t-drop { margin-left: 20px; }
.t-cc { margin-left: 22px; }
.t-wifi { margin-left: 20px; }
.pct { margin-left: 22px; width: 59px; font-size: 23px; letter-spacing: -.3px; }
.t-air { margin-left: 30px; }
.clock { margin-left: 38px; width: 220px; letter-spacing: .1px; }
.t-siri { margin-left: 34px; }
.t-list { margin-left: 24px; }

/* background windows */
.safari { position: absolute; left: 0; top: 46px; width: 2551px; height: 100px; border-radius: 10px 10px 0 0; background: linear-gradient(#f9f9f9, #eee 58px); display: flex; align-items: flex-start; padding-top: 15px; }
.lights { display: flex; gap: 16px; }
.lights i { width: 24px; height: 24px; border-radius: 50%; background: #fc605b; border: 1px solid #df4a45; }
.lights i:nth-child(2) { background: #fdbc40; border-color: #dd9f35; }
.lights i:nth-child(3) { background: #34c84a; border-color: #2aa83b; }
.lights.off { margin: 11px 0 0 26px; width: 129px; }
.lights.off i { background: #d9d9d9; border-color: #c8c8c8; }
.sb { height: 46px; border: 1.500px solid #dcdcdc; border-radius: 8px; display: flex; justify-content: center; align-items: center; background: #f6f6f6; }
.sb svg { fill: none; stroke: #ababab; stroke-width: 2; }
.back, .fwd { width: 52px; }
.side { width: 75px; margin-left: 18px; }
.honey { width: 76px; margin-left: 281px; }
.honey svg { stroke: #c2c2c2; }
.gram { width: 76px; margin-left: 14px; }
.addr { margin-left: 14px; width: 1043px; height: 46px; border: 1.500px solid #dcdcdc; border-radius: 8px; background: #f5f5f5; display: flex; align-items: center; padding: 0 11px 0 13px; font-family: Inter, sans-serif; font-size: 25px; letter-spacing: -.52px; }
.addr p { flex: 1; margin: 2px 0 0; text-align: center; white-space: pre; }
.addr p span { color: #5f5f5f; }
.down { width: 76px; margin-left: 422px; }
.share, .tabsb { width: 76px; margin-left: 14px; }
.backwin { position: absolute; top: 1440px; height: 38px; }
.backwin.dark { left: 0; width: 610px; background: #111; border-radius: 0 0 0 10px; }
.backwin.grey { left: 600px; width: 1950px; background: linear-gradient(90deg, #8c8c8c 96%, #aaa); border-radius: 0 0 14px 0; }

/* gephi window */
.gephi { position: absolute; left: 2px; top: 104px; width: 2558px; height: 1362px; border-radius: 10px 10px 12px 12px; overflow: hidden; background: #666; display: flex; flex-direction: column; box-shadow: 0 0 3px rgba(0,0,0,.6); }
.titlebar { height: 44px; flex: none; display: flex; align-items: center; background: linear-gradient(#ececec, #d3d3d3); padding-left: 16px; }
.titlebar h1 { flex: 1; margin: 1px 123px 0 0; text-align: center; font: 400 26px Inter, sans-serif; letter-spacing: .2px; color: #4a4a4a; }
.banner { height: 86px; flex: none; background: #fff; display: flex; align-items: center; gap: 38px; padding: 0 0 0 22px; position: relative; }
.banner::before { content: ""; position: absolute; inset: 0 auto 0 0; width: 660px; background: repeating-linear-gradient(135deg, #dcdcdc 0 1.500px, transparent 1.500px 11.300px); -webkit-mask: linear-gradient(90deg, #000, transparent); mask: linear-gradient(90deg, #000, transparent); }
.mode { position: relative; width: 320px; height: 42px; margin: 0; border: 2px solid #333; background: linear-gradient(#d8dac6, #b0b0b0 55%, #b4b4b4); display: flex; align-items: center; padding-left: 9px; }
.mode.on { background: linear-gradient(#fafafa, #e0e0e0 60%, #e3e3e3); }
.mode span { flex: 1; text-align: center; padding: 0 40px 3px 0; letter-spacing: .2px; }
.script { margin-left: auto; margin-right: 25px; }
.wsbar { height: 46px; flex: none; display: flex; background: #646464; border-bottom: 2px solid #333; box-shadow: inset 0 -2px #e0e0e0, inset 0 -4px #383838; }
.wtab { height: 41px; width: 232px; display: flex; align-items: center; padding: 0 0 2px 6px; border-right: 2px solid #444; border-top: 2px solid #444; background: linear-gradient(#d8dac6, #b0b0b0 55%, #b4b4b4); }
.wtab b { font-weight: 400; letter-spacing: .25px; padding-bottom: 1px; }
.wtab svg { margin-right: 7px; }
.wtab .x { margin: 0 9px 0 auto; }
.wtab.on { background: linear-gradient(#fafafa, #e1e1e1); height: 42px; }
.navs { margin: 2px 0 0 auto; display: flex; height: 28px; }
.navs i { width: 50px; border: 1px solid #7c7c7c; background: linear-gradient(#8f8f8f, #aaa); color: #555; display: flex; align-items: center; justify-content: center; font: 17px/1 "DejaVu Sans", sans-serif; }
.navs .dd { width: 39px; margin-left: 8px; border: 2px solid #454545; color: #222; }

.cols { flex: 1; min-height: 0; display: grid; grid-template-columns: 510px 1574px 450px; column-gap: 6px; padding: 6px 6px 0; }
.col { display: flex; flex-direction: column; gap: 6px; min-height: 0; }
.panel { background: #e2e2e2; overflow: hidden; display: flex; flex-direction: column; }
.tabs { height: 42px; flex: none; display: flex; background: linear-gradient(#bcbcbc, #9a9a9a 60%); border-top: 1.500px solid #3c3c3c; border-bottom: 3px solid #666; }
.tab { display: flex; align-items: center; justify-content: space-between; white-space: nowrap; border-right: 2px solid #3c3c3c; padding: 0 9px 1px 13px; letter-spacing: .3px; }
.tab.on { background: linear-gradient(#fafafa, #e1e1e1 70%); }
.tab.off { background: linear-gradient(#d8dac6, #b0b0b0 60%); width: 123px; justify-content: center; padding: 0 0 2px; }
.tabs .mini { margin: 2px 10px 0 auto; }
.ap { width: 186px; padding-left: 12px; }
.focus { width: 130px; padding-bottom: 4px; border-top: 4px solid #79aff0; }
.ctx { width: 143px; padding: 0 9px 1px 12px; }
.st { width: 152px; padding: 0 9px 3px 11px; }
.stats .tabs { border-bottom: 2px solid #4c4c4c; }
.stats .tab.on { height: 42px; }

.appearance { height: 450px; flex: none; }
.row1, .row2 { display: flex; align-items: flex-start; flex: none; border-bottom: 2px solid #666; }
.row1 { height: 66px; }
.row2 { height: 58px; }
.tg { height: 56px; padding: 0 14px 2px; display: flex; align-items: center; border-radius: 9px 9px 0 0; }
.row1 .tg { margin-top: 4px; width: 96px; justify-content: center; padding: 0 0 2px; letter-spacing: .2px; }
.row1 .tg + .tg { width: 90px; }
.row2 .tg.on { width: 104px; }
.row2 .tg + .tg { width: 118px; letter-spacing: .2px; }
.tg.on, .ib.on { background: #cbcbcb; }
.vdots { width: 3px; height: 50px; background: repeating-linear-gradient(#777 0 3px, transparent 3px 7px); }
.row1 .vdots { margin: 4px 54px 0 11px; }
.ib { width: 64px; height: 64px; display: flex; align-items: center; justify-content: center; border-radius: 9px 9px 0 0; }
.swatch { height: 220px; display: flex; gap: 13px; padding: 13px 0 0 13px; font-size: 26px; line-height: 30px; }
.swatch i { width: 26px; height: 26px; background: #c0c0c0; border-right: 2px solid #999; border-bottom: 2px solid #999; }
.swatch span { letter-spacing: 1.100px; }
.apply { flex: 1; margin-right: 6px; border-top: 2px solid #707070; display: flex; align-items: flex-start; padding: 7px 10px 0 239px; }
.apply > svg { margin: 17px 0 0; }
.mac { background: #fff; border: 1.500px solid #b9b9b9; border-radius: 9px; display: flex; align-items: center; padding-bottom: 1px; }
.apply .mac { margin-left: 65px; width: 170px; height: 42px; padding-left: 43px; gap: 12px; letter-spacing: .9px; }

.layout { flex: 1; }
.combo { margin: 25px 21px 0 19px; height: 40px; flex: none; background: #fff; border: 1.500px solid #bbb; border-radius: 8px; display: flex; font-size: 26px; line-height: 36px; overflow: hidden; }
.combo span { flex: 1; padding-left: 24px; letter-spacing: .65px; }
.combo i { width: 32px; background: linear-gradient(#5cb0fd, #1276fb); display: flex; align-items: center; justify-content: center; }
.runrow { margin: 45px 14px 0 13px; height: 52px; flex: none; display: flex; justify-content: space-between; }
.runrow > svg { margin: 7px 0 0; }
.ring { width: 142px; height: 52px; border: 3px solid #7fb1e6; padding-left: 28px; gap: 15px; letter-spacing: .5px; }
.props { margin: 16px 10px 0; height: 251px; flex: none; display: flex; border-bottom: 2px solid #2f6fd6; background: #fff; overflow: hidden; }
.ptable { width: 460px; margin-top: -31px; font-size: 26px; background: #e2e2e2; letter-spacing: .2px; }
.pr { height: 40px; display: flex; background: #e2e2e2; gap: 2px; }
.pr span { background: #fff; height: 38px; line-height: 38px; overflow: hidden; white-space: nowrap; }
.pr span:first-child { width: 227px; }
.pr span:last-child { width: 229px; padding-left: 8px; }
.cb { display: block; width: 28px; height: 28px; margin: 6px 0 0 7px; border: 1.500px solid #aaa; border-radius: 6px; background: #fff; }
.cb.ck { border: 0; background: #3b99fc; }
.pgroup { height: 40px; display: flex; align-items: center; gap: 15px; padding: 0 0 2px 13px; background: linear-gradient(#fff, #e0e0e0 70%); letter-spacing: .1px; }
.pgroup i { border: 9px solid transparent; border-top: 15px solid #888; border-bottom: 0; }
.pscroll { flex: 1; margin-left: 2px; border-left: 2px solid #e8e8e8; background: #fafafa; padding: 148px 0 0 4px; }
.pscroll i { display: block; width: 16px; height: 100px; border-radius: 8px; background: #c1c1c1; }
.pdesc { margin: 14px 10px 0; border-top: 2px solid #8c8c8c; height: 144px; flex: none; display: flex; justify-content: space-between; font-size: 26px; padding: 14px 12px 0 4px; line-height: 38px; letter-spacing: .5px; }
.q { width: 40px; height: 40px; border-radius: 50%; border: 1px solid #c9c9c9; background: #f3f3f3; color: #64aaf5; text-align: center; font-size: 28px; letter-spacing: 0; }
.pfoot { display: flex; align-items: center; padding-left: 8px; }
.flat { border: 2px solid #adadad; background: linear-gradient(#e2e2e2, #f8f8f8); display: flex; align-items: center; justify-content: center; letter-spacing: .3px; }
.pfoot .flat { width: 82px; height: 36px; letter-spacing: .4px; }
.pfoot .pre { width: 152px; height: 40px; gap: 15px; letter-spacing: .6px; justify-content: flex-start; padding-left: 10px; }
.pre svg { margin-top: -12px; }

/* graph */
.graph { display: flex; flex-direction: column; min-height: 0; }
.gtabs { height: 42px; flex: none; display: flex; align-items: flex-start; background: #646464; border-bottom: 2px solid #444; }
.gtabs .tab { width: 138px; height: 42px; padding: 0 9px 4px 16px; }
.gtabs .navs { margin: 1px 1px 0 auto; }
.gmid { flex: 1; display: flex; min-height: 0; }
.tools { width: 68px; background: #e2e2e2; display: flex; flex-direction: column; align-items: center; }
.logo { width: 68px; height: 56px; background: #fff; display: flex; align-items: center; justify-content: center; flex: none; }
.tool { width: 60px; height: 60px; padding-top: 1px; display: flex; align-items: center; justify-content: center; flex: none; }
.tool.on { background: #cbcbcb; border-radius: 9px 9px 0 0; padding-top: 3px; }
.hdots { width: 50px; height: 3px; margin: 8px 0 11px; flex: none; background: repeating-linear-gradient(90deg, #777 0 3px, transparent 3px 6px); }
.vbtns { margin: 88px 4px 0 0; display: grid; grid-template-rows: repeat(4, 40px); width: 56px; }
.gright { flex: 1; display: flex; flex-direction: column; }
.infobar { height: 56px; flex: none; display: flex; align-items: center; background: linear-gradient(90deg, #e2e2e2 355px, #d6d6d6 355px); font-size: 20px; letter-spacing: .3px; }
.infobar span { height: 40px; line-height: 38px; }
.sel { width: 355px; padding-left: 8px; border-right: 2px solid #999; }
.hint { flex: 1; padding-left: 17px; }
.size { padding: 0 10px; }
.canvas { flex: 1; background: #fff; }
.canvas svg { width: 1506px; height: 960px; }
.canvas circle { fill: #808080; stroke: #000; stroke-width: 2.200; }
.gbar { height: 72px; flex: none; background: #e2e2e2; display: flex; align-items: center; padding-left: 9px; padding-bottom: 4px; }
.gbar .flat { height: 40px; margin-right: -1px; }
.gbar .bulb { width: 58px; margin-left: 9px; }
.gbar .cam { width: 79px; gap: 11px; }
.d2 { margin: 0 24px 0 10px; }
.d3 { margin: 0 9px 0 25px; }
.eb { width: 60px; height: 60px; background: #cbcbcb; border-radius: 9px 9px 0 0; display: flex; align-items: center; justify-content: center; }
.bigT.o { margin: 0 28px 0 15px; }
.slider { height: 34px; display: flex; align-items: center; background: linear-gradient(#b1b1b1, #b1b1b1) center / 100% 6px no-repeat; }
.slider i { width: 32px; height: 32px; border-radius: 50%; background: #fff; border: 1px solid #bbb; box-shadow: 0 1px 2px rgba(0,0,0,.2); }
.s1 { width: 159px; }
.d4 { margin: 0 11px 0 36px; }
.fa { width: 57px; font-family: "Liberation Serif", serif; font-weight: 700; font-size: 28px; color: #444; }
.fa em { font: 12px "DejaVu Sans", sans-serif; color: #1d57d8; }
.fa.blue { color: #4668d8; }
.gbar .font { height: 36px; width: 204px; margin-right: 28px; padding-bottom: 1px; letter-spacing: .6px; }
.s2 { width: 145px; padding-left: 51px; }
.black { width: 33px; height: 31px; background: #000; margin-left: 26px; }
.clip { width: 57px; }
.eject { margin: 0 19px 0 auto; }

/* right column */
.context { height: 124px; flex: none; }
.cbody { height: 82px; font-size: 26px; overflow: hidden; padding-left: 15px; }
.cl { height: 38px; line-height: 38px; display: flex; letter-spacing: .2px; }
.cl b { width: 108px; letter-spacing: .2px; }
.cl.half { height: 16px; overflow: hidden; }
.cl.half > * { margin-top: -13px; }
.cl:nth-child(2) { margin-top: 9px; }
.cl.dg { margin-top: 6px; padding-left: 1px; }
.stats { flex: 1; }
.setrow { height: 38px; flex: none; border-bottom: 2px solid #666; padding-left: 1px; }
.setrow .flat { width: 110px; height: 36px; padding: 0 3px 2px 0; font-size: 22px; letter-spacing: .4px; }
.sarea { flex: 1; min-height: 0; display: flex; background: #fff; overflow: hidden; }
.slist { width: 420px; padding-top: 21px; overflow: hidden; height: 890px; font-size: 26px; }
.slist h3 { margin: 0; height: 40px; font-size: 26px; display: flex; align-items: center; gap: 11px; padding: 0 0 1px 10px; background: #f7f7f7; border: solid #cdd4e8; border-width: 1.500px 0; letter-spacing: .35px; }
.slist h3 + .sr { margin-top: -1px; }
.slist .sr + h3 { margin-top: 1px; }
.sr { height: 56px; padding: 4px 0 0 8px; display: flex; white-space: nowrap; }
.sr span { line-height: 40px; letter-spacing: .22px; }
.sr em { line-height: 40px; margin-left: 12px; letter-spacing: .6px; }
.sr .flat { flex: none; margin-left: auto; width: 74px; height: 40px; margin-right: -20px; font-size: 22px; justify-content: flex-start; padding: 0 0 1px 10px; }
.vs { flex: 1; border-left: 2px solid #e6e6e6; background: #fafafa; padding: 2px 0 0 6px; }
.vs i { display: block; width: 16px; height: 773px; border-radius: 8px; background: #c1c1c1; }
.hs { height: 30px; flex: none; background: #fff; }
.hs div { width: 420px; height: 30px; background: #fafafa; border-top: 2px solid #e6e6e6; padding: 6px 0 0 2px; }
.hs i { display: block; width: 352px; height: 16px; border-radius: 8px; background: #c1c1c1; }
.status { height: 50px; flex: none; border-top: 2px solid #333; background: linear-gradient(#d3d3d3, #cbcbcb); display: flex; justify-content: flex-end; align-items: center; padding-right: 34px; }

/* dock */
.dock { position: absolute; left: 62px; top: 1502px; width: 2436px; height: 98px; border-radius: 10px 10px 0 0; display: flex; padding-left: 6px; background: linear-gradient(90deg, #59565b, #675d60 20%, #655a5e 48%, #67697b 56%, #7585a5 68%, #9c7a7c 74%, #ea7b55 79%, #d97e63 84%, #ad706b 90%, #8b6f7d 95%, #6f7890); }
.dock svg { width: 79.650px; height: 98px; }
.dock .div { width: 2px; height: 70px; margin: 13px 17px 0 16px; background: #a3492d; }
.dot { fill: #000; }
.dot.r { fill: #4b0505; }
.badge { font: 18px Inter, sans-serif; letter-spacing: -.5px; fill: #fff; text-anchor: middle; }
```

FILE: graph.js
```js
// Node centres as exported by the layout, in layout units.
const nodes = [
  279,153,369,126,445,180,524,132,601,183,674,139,753,190,834,145,910,205,988,253,1062,304,1139,357,1344,169,1406,237,
  362,221,437,274,517,231,594,281,673,234,749,288,833,242,910,295,980,348,1055,401,1131,449,1206,501,1291,360,1370,411,
  278,359,355,318,436,370,518,326,594,377,672,328,745,376,829,338,908,388,974,439,1052,496,1128,544,1284,456,1366,506,
  273,457,355,416,431,464,510,421,585,472,671,428,743,478,824,431,899,484,967,536,1050,589,1203,595,1283,554,1440,565,
  198,500,353,502,429,557,508,510,583,565,665,519,738,572,816,531,893,580,967,629,1043,685,1124,641,1360,605,
  121,548,271,552,192,600,351,604,422,653,506,611,584,660,660,620,733,668,810,626,884,674,963,727,1042,777,1120,737,1198,692,1280,646,1354,702,1440,671,
  115,641,268,650,195,690,344,704,425,754,503,705,569,757,656,714,726,766,806,720,884,771,961,822,1034,875,1113,831,1197,788,1273,745,1353,797,
  112,738,269,743,190,795,344,799,420,848,495,806,568,857,649,815,721,866,804,820,882,867,956,918,1032,970,1107,925,1187,881,1271,841,1348,894,
  264,842,184,885,342,892,414,944,493,899,574,947,644,1000,725,953,798,910,879,961,954,1012,1031,1068,1112,1019,1184,979,1263,936,1338,992,
  259,939,179,977,337,987,410,1038,493,993,570,1045,642,1097,721,1051,798,1012,875,1061,949,1113,1021,1166,1100,1124,1183,1074,1257,1034,
  174,1077,256,1032,337,1083,409,1133,488,1089,563,1140,638,1193,714,1149,798,1101,872,1159,947,1212,1015,1267,1097,1222,1179,1176,1259,1199,
  254,1132,330,1174,408,1231,483,1184,557,1234,632,1293,713,1245,792,1199,866,1253,939,1307,1016,1360,1093,1320,
  324,1270,481,1282,557,1334,466,1374,711,1344,787,1293,859,1346,780,1394,916,1420,815,1479
];
const net = document.getElementById("net");
for (let i = 0; i < nodes.length; i += 2) {
  const c = document.createElementNS("http://www.w3.org/2000/svg", "circle");
  c.setAttribute("cx", (1100 + nodes[i] / 2.8).toFixed(1));
  c.setAttribute("cy", (600 + nodes[i + 1] / 3).toFixed(1));
  c.setAttribute("r", 13.6);
  net.appendChild(c);
}
```
